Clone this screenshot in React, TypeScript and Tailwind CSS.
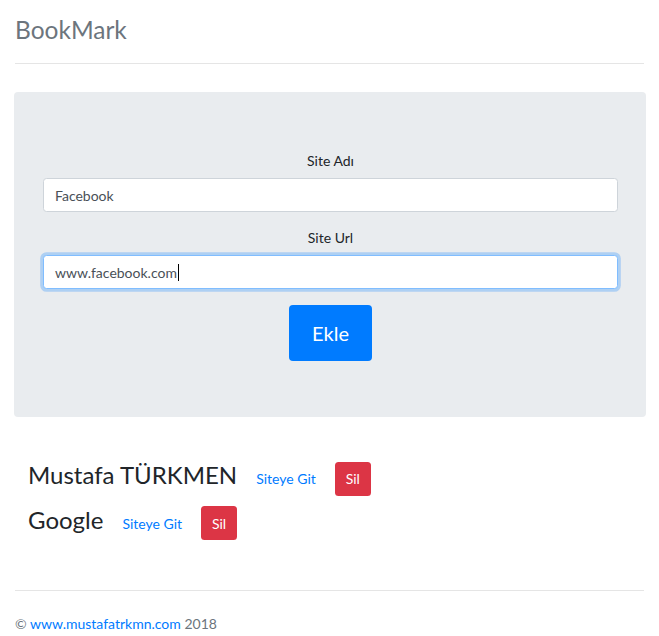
import React from "react";

const font = { fontFamily: "Lato, 'Open Sans', sans-serif" };

function Row({ name }: { name: string }) {
  return (
    <div className="flex items-baseline">
      <span className="text-[24px] leading-[1.2] text-[#212529]">{name}</span>
      <a href="#" className="ml-[19px] text-[14px] leading-[1.5] text-[#007bff]">
        Siteye Git
      </a>
      <button className="ml-[19px] h-[33.5px] w-[36px] rounded-[3.5px] bg-[#dc3545] text-[14px] leading-[1.5] text-white">
        Sil
      </button>
    </div>
  );
}

export default function App() {
  return (
    <div className="min-h-[636px] w-[659px] bg-white" style={font}>
      <div className="px-[15px]">
        <div className="border-b border-[#e5e5e5] pb-[19px] pt-[15px]">
          <h3 className="text-[24.5px] leading-[1.2] text-[#6c757d]">BookMark</h3>
        </div>
      </div>

      <div className="ml-[14px] mr-[13px] mt-[28px] rounded-[4px] bg-[#e9ecef] pb-[56px] pl-[29px] pr-[28px] pt-[58px]">
        <div className="text-center text-[14px] leading-[21px] text-[#212529]">Site Adı</div>
        <div className="mt-[7px] flex h-[34px] items-center rounded-[3.5px] border border-[#ced4da] bg-white px-[11px] text-[14px] text-[#495057]">
          Facebook
        </div>
        <div className="mt-[15px] text-center text-[14px] leading-[21px] text-[#212529]">Site Url</div>
        <div className="mt-[7px] flex h-[34px] items-center rounded-[3.5px] border border-[#80bdff] bg-white px-[11px] text-[14px] text-[#495057] shadow-[0_0_0_2.8px_rgba(0,123,255,0.25)]">
          <span>www.facebook.com</span>
          <span className="ml-px inline-block h-[17px] w-px bg-black" />
        </div>
        <div className="mt-[16px] flex justify-center">
          <button className="h-[56px] w-[83px] rounded-[4px] bg-[#007bff] text-[20px] text-white">
            Ekle
          </button>
        </div>
      </div>

      <div className="mt-[44px] flex flex-col gap-[10px] pl-[28px]">
        <Row name="Mustafa TÜRKMEN" />
        <Row name="Google" />
      </div>

      <div className="mt-[50px] px-[15px]">
        <div className="border-t border-[#e5e5e5] pt-[22px] text-[14px] leading-[21px] text-[#6c757d]">
          © <a href="#" className="text-[#007bff]">www.mustafatrkmn.com</a> 2018
        </div>
      </div>
    </div>
  );
}
